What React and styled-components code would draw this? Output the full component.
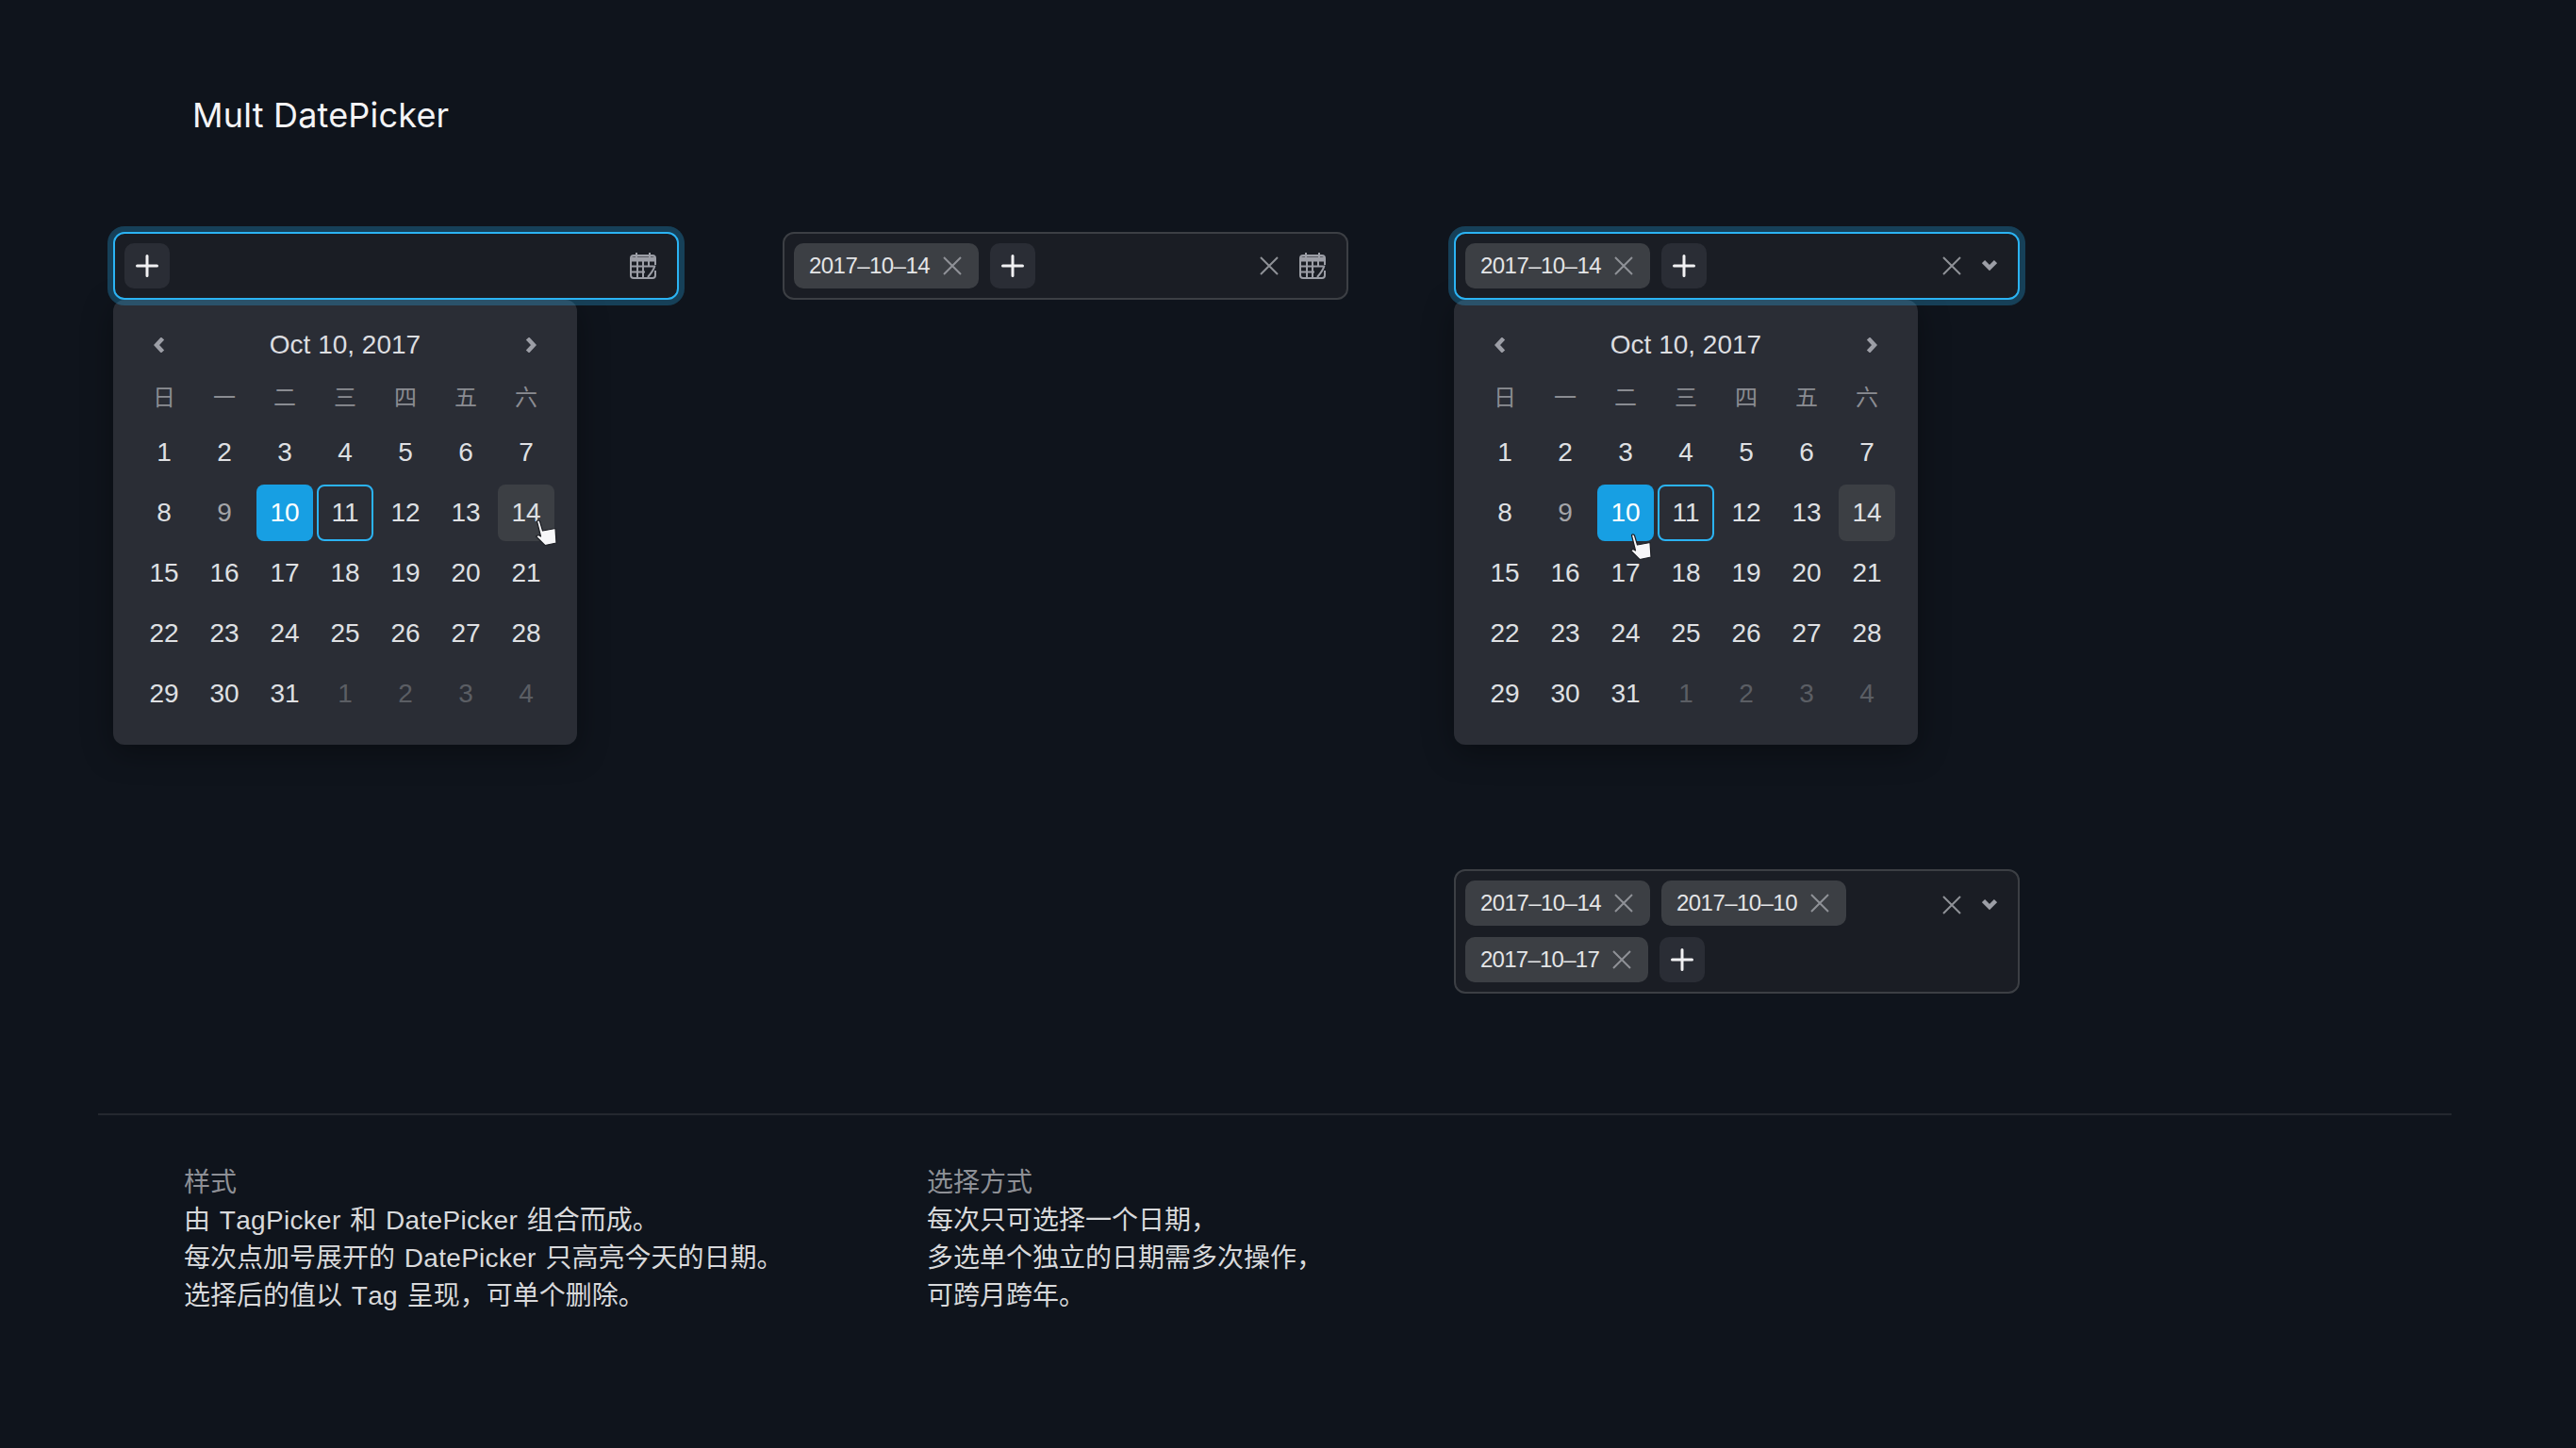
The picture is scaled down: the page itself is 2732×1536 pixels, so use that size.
import styled, { createGlobalStyle } from 'styled-components'

const FONT = '"Liberation Sans", "Noto Sans CJK SC", sans-serif'

const GlobalStyle = createGlobalStyle`
    html, body {
        margin: 0;
        padding: 0;
        background: #0f141c;
    }
    * {
        box-sizing: border-box;
    }
`

const WEEK = ['日', '一', '二', '三', '四', '五', '六']

const DAYS = [
    ...Array.from({ length: 31 }, (_, i) => ({ label: i + 1 })),
    ...[1, 2, 3, 4].map((d) => ({ label: d, next: true })),
]

const PlusIcon = () => (
    <svg width="24" height="24" viewBox="0 0 24 24" fill="none" stroke="#f1f1f3" strokeWidth="3" strokeLinecap="round">
        <path d="M12 1.5v21M1.5 12h21" />
    </svg>
)

const CloseIcon = () => (
    <svg width="24" height="24" viewBox="0 0 24 24" fill="none" stroke="#8f9197" strokeWidth="2">
        <path d="M3 3l18 18M21 3L3 21" />
    </svg>
)

const CalendarIcon = () => (
    <svg width="28" height="28" viewBox="0 0 28 28" fill="none" stroke="#9c9ea6" strokeWidth="2">
        <path d="M7 0v5M21 0v5" />
        <path d="M27 19v5a3 3 0 0 1-3 3H4a3 3 0 0 1-3-3V6a3 3 0 0 1 3-3h20a3 3 0 0 1 3 3v7" />
        <path d="M1 4.5h26v5H1z" fill="#9c9ea6" stroke="none" />
        <path d="M8 9v17M14 9v17M20 9v6M1 14.5h24M1 20.5h15" />
        <path d="M26.5 13.5c-1 5-4 8.500-7.500 12.500" />
    </svg>
)

const ChevronDown = () => (
    <svg width="16" height="28" viewBox="0 0 16 28" fill="none" stroke="#9c9ea6" strokeWidth="4.500">
        <path d="M1.500 9.500l6.500 6.500 6.500-6.500" />
    </svg>
)

const ChevronSide = ({ flip }) => (
    <svg width="12" height="16" viewBox="0 0 12 16" fill="none" stroke="#9c9ea6" strokeWidth="4.500">
        <path d={flip ? 'M2.500 1l6.500 7-6.500 7' : 'M9.500 1L3 8l6.500 7'} />
    </svg>
)

const HandCursor = () => (
    <svg width="24" height="28" viewBox="0 0 24 28">
        <path
            d="M2.500 2C2.500.5 5 .5 5.500 2L8.500 12 14 11l8-1.500 1 15.500-12 2.500-9.500-9.500L4 16.500l2.500 1.500z"
            fill="#f7f7f9"
            stroke="#1c1e24"
            strokeWidth="1.200"
            strokeLinejoin="round"
        />
    </svg>
)

const Tag = ({ children, tight }) => (
    <TagBox>
        <TagText $tight={tight}>{children}</TagText>
        <CloseIcon />
    </TagBox>
)

const AddButton = () => (
    <SquareButton>
        <PlusIcon />
    </SquareButton>
)

const Calendar = ({ pointer }) => (
    <Popup>
        <CalendarHeader>
            <ChevronSide />
            <MonthTitle>Oct 10, 2017</MonthTitle>
            <ChevronSide flip />
        </CalendarHeader>
        <WeekRow>
            {WEEK.map((w) => <WeekLabel key={w}>{w}</WeekLabel>)}
        </WeekRow>
        <DayGrid>
            {DAYS.map((d) => (
                <Day
                    key={`${d.label}-${d.next ? 'n' : 'c'}`}
                    $next={d.next}
                    $muted={!d.next && d.label === 9}
                    $selected={!d.next && d.label === 10}
                    $today={!d.next && d.label === 11}
                    $hover={!d.next && d.label === 14}
                >
                    {d.label}
                    {!d.next && d.label === pointer.day && (
                        <Pointer $left={pointer.left} $top={pointer.top}>
                            <HandCursor />
                        </Pointer>
                    )}
                </Day>
            ))}
        </DayGrid>
    </Popup>
)

export default function App() {
    return (
        <Page>
            <GlobalStyle />
            <Title>Mult DatePicker</Title>
            <DemoRow>
                <Demo>
                    <Field $focused>
                        <TagArea>
                            <AddButton />
                        </TagArea>
                        <Actions>
                            <CalendarIcon />
                        </Actions>
                    </Field>
                    <Calendar pointer={{ day: 14, left: 39, top: 37 }} />
                </Demo>
                <Demo>
                    <Field>
                        <TagArea>
                            <Tag>2017–10–14</Tag>
                            <AddButton />
                        </TagArea>
                        <Actions>
                            <CloseIcon />
                            <CalendarIcon />
                        </Actions>
                    </Field>
                </Demo>
                <Demo>
                    <Field $focused>
                        <TagArea>
                            <Tag>2017–10–14</Tag>
                            <AddButton />
                        </TagArea>
                        <Actions>
                            <CloseIcon />
                            <ChevronDown />
                        </Actions>
                    </Field>
                    <Calendar pointer={{ day: 10, left: 34, top: 52 }} />
                    <LowerField>
                        <TagArea>
                            <Tag>2017–10–14</Tag>
                            <Tag>2017–10–10</Tag>
                            <Tag tight>2017–10–17</Tag>
                            <AddButton />
                        </TagArea>
                        <Actions>
                            <CloseIcon />
                            <ChevronDown />
                        </Actions>
                    </LowerField>
                </Demo>
            </DemoRow>
            <Divider />
            <Notes>
                <NoteColumn>
                    <NoteTitle>样式</NoteTitle>
                    <p>由 <Latin>TagPicker</Latin> 和 <Latin>DatePicker</Latin> 组合而成。</p>
                    <p>每次点加号展开的 <Latin>DatePicker</Latin> 只高亮今天的日期。</p>
                    <p>选择后的值以 <Latin>Tag</Latin> 呈现，可单个删除。</p>
                </NoteColumn>
                <NoteColumn>
                    <NoteTitle>选择方式</NoteTitle>
                    <p>每次只可选择一个日期，</p>
                    <p>多选单个独立的日期需多次操作，</p>
                    <p>可跨月跨年。</p>
                </NoteColumn>
            </Notes>
        </Page>
    )
}

const Page = styled.div`
    width: 2732px;
    height: 1536px;
    padding-top: 97px;
    background: #0f141c;
    font-family: ${FONT};
    overflow: hidden;
`
const Title = styled.h1`
    margin: 0 0 0 204px;
    height: 50px;
    font-family: Inter, ${FONT};
    font-size: 36px;
    line-height: 50px;
    font-weight: 400;
    letter-spacing: 0.2px;
    color: #f4f4f6;
`
const DemoRow = styled.div`
    display: grid;
    grid-template-columns: 710px 712px 600px;
    margin-top: 99px;
    padding-left: 120px;
`
const Demo = styled.div`
    width: 600px;
`
const Actions = styled.div`
    display: flex;
    align-items: center;
    gap: 20px;
    height: 48px;
    padding-right: 12px;
`
const Field = styled.div`
    position: relative;
    z-index: 1;
    display: flex;
    align-items: flex-start;
    width: 600px;
    min-height: 72px;
    padding: 10px;
    background: #1a1d24;
    border: 2px solid ${({ $focused }) => ($focused ? '#2bb3f3' : '#3c3f44')};
    border-radius: 12px;
    box-shadow: ${({ $focused }) => ($focused ? '0 0 0 6px rgba(43, 179, 243, 0.28)' : 'none')};
`
const LowerField = styled(Field)`
    margin-top: 132px;
    ${Actions} {
        margin-top: 2px;
    }
`
const TagArea = styled.div`
    display: flex;
    flex-wrap: wrap;
    flex: 1;
    gap: 12px;
`
const TagBox = styled.div`
    display: flex;
    align-items: center;
    gap: 12px;
    height: 48px;
    padding: 0 16px;
    background: #3c3f44;
    border-radius: 10px;
`
const TagText = styled.span`
    font-size: 24px;
    letter-spacing: ${({ $tight }) => ($tight ? '-0.75px' : '-0.55px')};
    color: #e4e5e7;
`
const SquareButton = styled.div`
    display: flex;
    align-items: center;
    justify-content: center;
    width: 48px;
    height: 48px;
    background: #2a2d35;
    border-radius: 10px;
`
const Popup = styled.div`
    width: 492px;
    height: 472px;
    padding: 24px;
    background: #2a2d35;
    border-radius: 12px;
    box-shadow: 0 8px 32px rgba(0, 0, 0, 0.35);
`
const CalendarHeader = styled.div`
    display: flex;
    align-items: center;
    justify-content: space-between;
    height: 48px;
    padding: 0 19px;
`
const MonthTitle = styled.span`
    font-size: 28px;
    color: #dcdde0;
`
const WeekRow = styled.div`
    display: grid;
    grid-template-columns: repeat(7, 60px);
    column-gap: 4px;
    height: 40px;
    margin: 9px 0 11px;
`
const WeekLabel = styled.div`
    display: flex;
    align-items: center;
    justify-content: center;
    font-size: 24px;
    color: #8a8c92;
`
const DayGrid = styled.div`
    display: grid;
    grid-template-columns: repeat(7, 60px);
    grid-auto-rows: 60px;
    gap: 4px;
`
const dayColor = ({ $next, $muted, $selected }) => {
    if ($selected) return '#ffffff'
    if ($next) return '#5b5e64'
    if ($muted) return '#a4a5a9'
    return '#dfe0e3'
}
const dayBackground = ({ $selected, $hover }) => {
    if ($selected) return '#179fe3'
    if ($hover) return '#3c3f44'
    return 'transparent'
}
const Day = styled.div`
    position: relative;
    display: flex;
    align-items: center;
    justify-content: center;
    font-size: 28px;
    color: ${dayColor};
    background: ${dayBackground};
    border: ${({ $today }) => ($today ? '2px solid #2bb3f3' : 'none')};
    border-radius: 8px;
`
const Pointer = styled.div`
    position: absolute;
    left: ${({ $left }) => $left}px;
    top: ${({ $top }) => $top}px;
    z-index: 2;
    display: flex;
`
const Divider = styled.div`
    height: 2px;
    margin: 127px 132px 0 104px;
    background: #24282f;
`
const Notes = styled.div`
    display: flex;
    margin-top: 52px;
    padding-left: 195px;
`
const NoteColumn = styled.div`
    width: 788px;
    font-size: 28px;
    line-height: 40px;
    word-spacing: 2px;
    color: #d8d9db;
    p {
        margin: 0;
    }
`
const NoteTitle = styled.div`
    color: #8e9096;
`
const Latin = styled.span`
    letter-spacing: 0.3px;
    font-kerning: none;
`
